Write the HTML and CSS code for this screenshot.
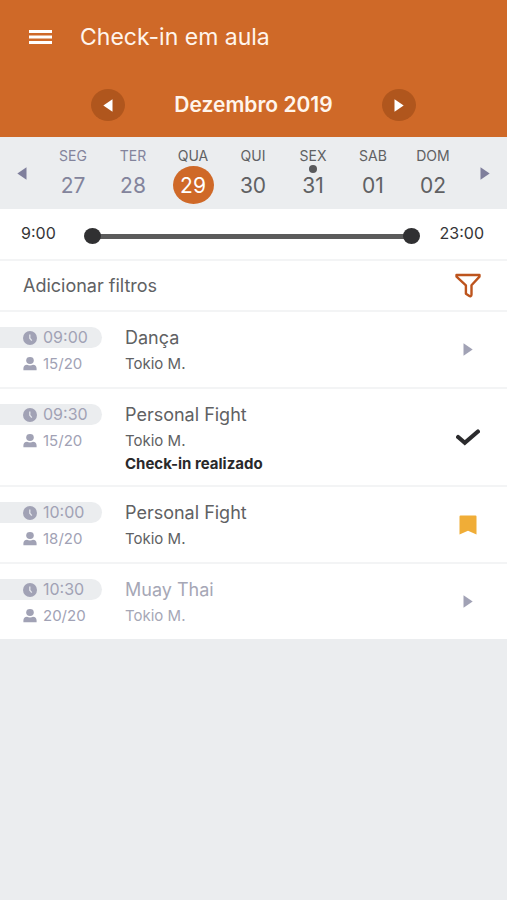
FILE: index.html
```html
<!DOCTYPE html>
<html lang="pt-BR">
<head>
<meta charset="utf-8">
<meta name="viewport" content="width=device-width, initial-scale=1">
<title>Check-in em aula</title>
<link rel="stylesheet" href="styles.css">
</head>
<body>
<svg class="sprite" aria-hidden="true">
  <symbol id="left" viewBox="0 0 10 13"><path d="M9.500 .3v12.400L.3 6.500z"/></symbol>
  <symbol id="right" viewBox="0 0 10 13"><path d="M.5 .3v12.400l9.200-6.200z"/></symbol>
  <symbol id="clock" viewBox="0 0 14 14"><circle cx="7" cy="7" r="7"/><path d="M6.800 3.400v3.900l2 2.300" fill="none" stroke="#e4e6eb" stroke-width="1.300"/></symbol>
  <symbol id="person" viewBox="0 0 14 14"><ellipse cx="7" cy="3.500" rx="3.800" ry="3.400"/><path d="M.4 13.300v-1.800C.4 9.300 1.800 7.800 4 7.800c1.800.9 4.200.9 6 0 2.200 0 3.600 1.500 3.600 3.700v1.800z"/></symbol>
</svg>

<header class="top">
  <div class="bar">
    <button class="menu" aria-label="Abrir menu">
      <svg width="23" height="14" viewBox="0 0 23 14"><path d="M0 1.500h23M0 7h23M0 12.500h23" stroke="#fff" stroke-width="2.800"/></svg>
    </button>
    <h1>Check-in em aula</h1>
  </div>
  <div class="month">
    <button class="round" aria-label="Mês anterior"><svg class="arrow"><use href="#left"/></svg></button>
    <h2>Dezembro 2019</h2>
    <button class="round" aria-label="Próximo mês"><svg class="arrow"><use href="#right"/></svg></button>
  </div>
</header>

<nav class="week" aria-label="Semana">
  <button class="step" aria-label="Semana anterior"><svg class="arrow"><use href="#left"/></svg></button>
  <button class="day past"><span class="name">SEG</span><span class="num">27</span></button>
  <button class="day past"><span class="name">TER</span><span class="num">28</span></button>
  <button class="day current" aria-current="date"><span class="name">QUA</span><span class="num">29</span></button>
  <button class="day"><span class="name">QUI</span><span class="num">30</span></button>
  <button class="day marked"><span class="name">SEX</span><span class="num">31</span></button>
  <button class="day"><span class="name">SAB</span><span class="num">01</span></button>
  <button class="day"><span class="name">DOM</span><span class="num">02</span></button>
  <button class="step" aria-label="Próxima semana"><svg class="arrow"><use href="#right"/></svg></button>
</nav>

<section class="hours">
  <label for="from">9:00</label>
  <div class="range">
    <input type="range" id="from" min="9" max="23" value="9">
    <input type="range" id="to" min="9" max="23" value="23">
  </div>
  <label for="to">23:00</label>
</section>

<button class="filters">
  <span>Adicionar filtros</span>
  <svg width="26" height="25" viewBox="0 0 26 25"><path d="M1.500 2h23v1.600L16.500 12.300v9.200c0 1.700-1.300 2.100-2.500 1.300l-3.100-2V12.300L1.500 3.600z" fill="none" stroke="#bd541d" stroke-width="2.400" stroke-linejoin="round"/></svg>
</button>

<main>
  <ul class="classes">
    <li class="class">
      <div class="when">
        <span class="time"><svg class="icon"><use href="#clock"/></svg>09:00</span>
        <span class="seats"><svg class="icon"><use href="#person"/></svg>15/20</span>
      </div>
      <div class="info"><h3>Dança</h3><p>Tokio M.</p></div>
      <button class="action" aria-label="Abrir Dança"><svg class="arrow"><use href="#right"/></svg></button>
    </li>
    <li class="class">
      <div class="when">
        <span class="time"><svg class="icon"><use href="#clock"/></svg>09:30</span>
        <span class="seats"><svg class="icon"><use href="#person"/></svg>15/20</span>
      </div>
      <div class="info"><h3>Personal Fight</h3><p>Tokio M.</p><strong>Check-in realizado</strong></div>
      <button class="action" aria-label="Check-in realizado"><svg width="24" height="17" viewBox="0 0 24 17"><path d="M2.100 8l6.700 5.800L21.900 2.500" fill="none" stroke="#2b2b2d" stroke-width="4.200" stroke-linecap="round"/></svg></button>
    </li>
    <li class="class">
      <div class="when">
        <span class="time"><svg class="icon"><use href="#clock"/></svg>10:00</span>
        <span class="seats"><svg class="icon"><use href="#person"/></svg>18/20</span>
      </div>
      <div class="info"><h3>Personal Fight</h3><p>Tokio M.</p></div>
      <button class="action" aria-label="Reservado"><svg width="18" height="20" viewBox="0 0 18 20"><path d="M.5 1.500q0-1 1-1h15q1 0 1 1v18L9 15.800.5 19.500z" fill="#f0ad37"/></svg></button>
    </li>
    <li class="class full">
      <div class="when">
        <span class="time"><svg class="icon"><use href="#clock"/></svg>10:30</span>
        <span class="seats"><svg class="icon"><use href="#person"/></svg>20/20</span>
      </div>
      <div class="info"><h3>Muay Thai</h3><p>Tokio M.</p></div>
      <button class="action" aria-label="Abrir Muay Thai"><svg class="arrow"><use href="#right"/></svg></button>
    </li>
  </ul>
</main>
</body>
</html>
```

FILE: styles.css
```css
* { box-sizing: border-box; margin: 0; padding: 0; }

body {
  background: #ebedef;
  color: #606163;
  font-family: Inter, "Liberation Sans", sans-serif;
  font-size: 15px;
}

button {
  background: none;
  border: 0;
  color: inherit;
  cursor: pointer;
  font: inherit;
}

svg { display: block; flex: none; }
.sprite { position: absolute; width: 0; height: 0; }
.arrow { width: 10px; height: 13px; fill: currentColor; }
.icon { width: 14px; height: 14px; fill: currentColor; }

.top { background: #cf6928; color: #fff5ec; padding: 21px 0 16px; }
.bar { display: flex; align-items: center; gap: 28px; padding: 0 29px; }
.bar h1 { font-size: 23px; font-weight: 400; line-height: 32px; }
.month {
  display: flex;
  align-items: center;
  justify-content: space-between;
  margin-top: 36px;
  padding: 0 18%;
}
.month h2 { font-size: 21px; font-weight: 600; line-height: 32px; }
.round {
  display: grid;
  place-items: center;
  width: 34px;
  height: 32px;
  border-radius: 50%;
  background: #b0561d;
  color: #fff;
}

.week {
  display: grid;
  grid-template-columns: 43px repeat(7, 1fr) 44px;
  padding: 11px 0 5px;
}
.step { display: grid; place-items: center; padding-bottom: 6px; color: #7f7f9c; }
.day {
  position: relative;
  display: flex;
  flex-direction: column;
  align-items: center;
  gap: 2px;
}
.day.past { color: #83849c; }
.name { font-size: 14px; line-height: 16px; }
.num {
  width: 41px;
  height: 38px;
  border-radius: 50%;
  font-size: 21px;
  line-height: 39px;
}
.current .num { background: #cf6928; color: #fff; }
.marked::after {
  content: "";
  position: absolute;
  top: 17px;
  left: calc(50% - 4px);
  width: 8px;
  height: 8px;
  border-radius: 50%;
  background: #58595b;
}

.hours {
  display: flex;
  align-items: center;
  justify-content: space-between;
  gap: 20px;
  padding: 13px 23px 15px 21px;
  background: #fff;
  border-bottom: 2px solid #f3f4f5;
  color: #353537;
  font-size: 16px;
}
.hours label { min-width: 43px; line-height: 22px; }
.range { display: grid; flex: 1; padding-top: 6px; }
.range input {
  grid-area: 1 / 1;
  appearance: none;
  width: 100%;
  height: 16px;
  background: linear-gradient(#5b5b5b, #5b5b5b) center / calc(100% - 12px) 5px no-repeat;
  pointer-events: none;
}
.range input + input { background: none; }
.range input::-webkit-slider-thumb {
  appearance: none;
  width: 17px;
  height: 16px;
  border-radius: 50%;
  background: #303032;
  pointer-events: auto;
}

.filters {
  display: flex;
  align-items: center;
  justify-content: space-between;
  width: 100%;
  padding: 12px 26px 12px 23px;
  background: #fff;
  border-bottom: 2px solid #f3f4f5;
  font-size: 18px;
  line-height: 24px;
}

.classes { list-style: none; background: #fff; }
.class {
  display: grid;
  grid-template-columns: 125px 1fr 78px;
  border-bottom: 2px solid #f3f4f5;
}
.class:last-child { border-bottom: 0; }
.when, .info { display: flex; flex-direction: column; gap: 5px; padding: 15px 0 13px; }
.when { align-items: flex-start; color: #a1a2b5; }
.time, .seats {
  display: flex;
  align-items: center;
  gap: 6px;
  padding-left: 23px;
  line-height: 21px;
}
.time { width: 102px; border-radius: 0 11px 11px 0; background: #ebedef; font-size: 16px; }
.info h3 { font-size: 18px; font-weight: 400; line-height: 21px; }
.info p { line-height: 21px; }
.info strong { color: #29292b; font-weight: 700; line-height: 20px; margin: -2px 0; }
.full .info { color: #a6a7b6; }
.action { display: grid; place-items: center; color: #a1a2b5; }
```
